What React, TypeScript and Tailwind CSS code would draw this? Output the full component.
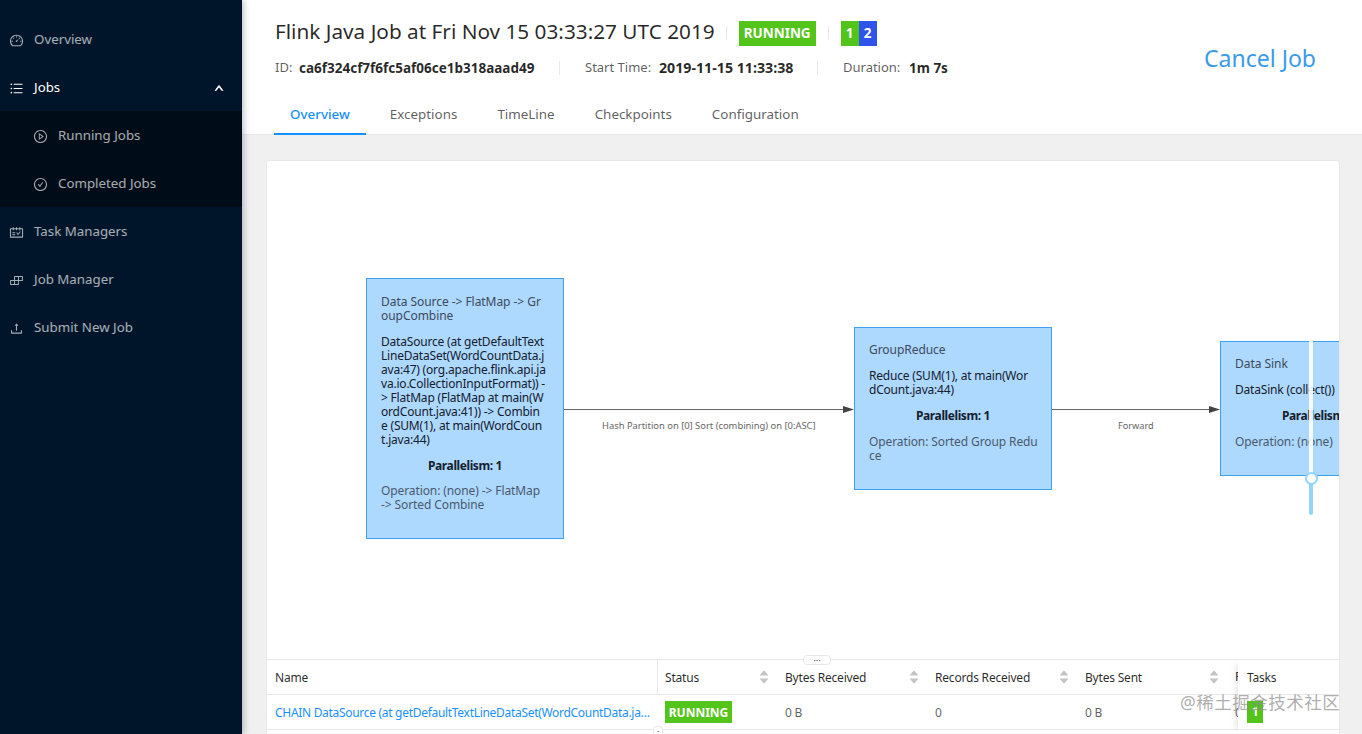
import type { ReactNode } from "react";
import {
  AiFillCaretDown,
  AiFillCaretUp,
  AiOutlineBuild,
  AiOutlineCheckCircle,
  AiOutlineDashboard,
  AiOutlinePlayCircle,
  AiOutlineSchedule,
  AiOutlineUnorderedList,
  AiOutlineUp,
  AiOutlineUpload,
} from "react-icons/ai";

const font = { fontFamily: '"Noto Sans", "Noto Sans CJK SC", sans-serif' };

function MenuItem({ icon, label, sub, active }: { icon: ReactNode; label: string; sub?: boolean; active?: boolean }) {
  return (
    <div
      className={`flex h-12 items-center gap-[10px] pt-[2px] text-[13.3px] ${sub ? "pl-[33px]" : "pl-[9px]"} ${active ? "text-white" : "text-white/65"}`}
    >
      <span className="text-[15px]">{icon}</span>
      <span>{label}</span>
      {active && <AiOutlineUp className="mr-[18px] ml-auto text-[10px]" strokeWidth={100} />}
    </div>
  );
}

function Sidebar() {
  return (
    <aside className="z-10 w-[242px] shrink-0 bg-[#001529] pt-[15px] shadow-[2px_0_6px_rgba(0,21,41,0.25)]">
      <MenuItem icon={<AiOutlineDashboard />} label="Overview" />
      <MenuItem icon={<AiOutlineUnorderedList />} label="Jobs" active />
      <div className="bg-[#000c17]">
        <MenuItem icon={<AiOutlinePlayCircle />} label="Running Jobs" sub />
        <MenuItem icon={<AiOutlineCheckCircle />} label="Completed Jobs" sub />
      </div>
      <MenuItem icon={<AiOutlineSchedule />} label="Task Managers" />
      <MenuItem icon={<AiOutlineBuild />} label="Job Manager" />
      <MenuItem icon={<AiOutlineUpload />} label="Submit New Job" />
    </aside>
  );
}

const Divider = () => <span className="block h-[14px] w-px bg-[#e8e8e8]" />;

function Header() {
  const tabs = ["Overview", "Exceptions", "TimeLine", "Checkpoints", "Configuration"];
  return (
    <header className="h-[135px] shrink-0 border-b border-[#e8e8e8] bg-white">
      <div className="flex items-start justify-between pt-5 pr-[46px] pl-[33px]">
        <div>
          <div className="flex h-[26px] items-center">
            <h1 className="mb-[3px] text-[20.75px] font-normal text-black/85">Flink Java Job at Fri Nov 15 03:33:27 UTC 2019</h1>
            <span className="mx-[11.5px]"><Divider /></span>
            <span className="flex h-[25px] w-[77px] items-center justify-center bg-[#52c41a] text-[13.5px] font-bold text-white">
              RUNNING
            </span>
            <span className="mx-3"><Divider /></span>
            <span className="flex h-[25px] text-[13.5px] font-bold text-white">
              <span className="flex w-[18px] items-center justify-center bg-[#52c41a]">1</span>
              <span className="flex w-[18px] items-center justify-center bg-[#2f54eb]">2</span>
            </span>
          </div>
          <div className="mt-[12px] flex h-[20px] items-center text-[13px] text-black/65">
            <span className="w-[24px]">ID:</span>
            <b className="w-[260px] text-[13.5px] font-bold text-black/85">ca6f324cf7f6fc5af06ce1b318aaad49</b>
            <Divider />
            <span className="ml-[25px] w-[74px]">Start Time:</span>
            <b className="w-[158px] text-[14.2px] font-bold text-black/85">2019-11-15 11:33:38</b>
            <Divider />
            <span className="ml-[25px] w-[66px]">Duration:</span>
            <b className="text-[13.5px] font-bold text-black/85">1m 7s</b>
          </div>
        </div>
        <span className="mt-[21px] text-[23px] text-[#3a9be8]">Cancel Job</span>
      </div>
      <nav className="mt-[18px] flex pl-8">
        {tabs.map((tab, i) => (
          <div
            key={tab}
            className={`mr-2 flex h-[39px] items-center border-b-2 px-4 text-[13.4px] ${
              i === 0 ? "border-[#1890ff] font-medium text-[#1890ff]" : "border-transparent text-black/65"
            }`}
          >
            {tab}
          </div>
        ))}
      </nav>
    </header>
  );
}

interface PlanNode {
  box: string;
  opGap: string;
  title: string;
  detail: string;
  operation: string;
}

const nodes: PlanNode[] = [
  {
    box: "left-[99px] top-[117px] h-[261px] pt-4",
    opGap: "mt-[11px]",
    title: "Data Source -> FlatMap -> Gr\noupCombine",
    detail:
      "DataSource (at getDefaultText\nLineDataSet(WordCountData.j\nava:47) (org.apache.flink.api.ja\nva.io.CollectionInputFormat)) -\n> FlatMap (FlatMap at main(W\nordCount.java:41)) -> Combin\ne (SUM(1), at main(WordCoun\nt.java:44)",
    operation: "Operation: (none) -> FlatMap\n-> Sorted Combine",
  },
  {
    box: "left-[587px] top-[166px] h-[163px] pt-[15px]",
    opGap: "mt-3",
    title: "GroupReduce",
    detail: "Reduce (SUM(1), at main(Wor\ndCount.java:44)",
    operation: "Operation: Sorted Group Redu\nce",
  },
  {
    box: "left-[953px] top-[180px] h-[135px] pt-[15px]",
    opGap: "mt-3",
    title: "Data Sink",
    detail: "DataSink (collect())",
    operation: "Operation: (none)",
  },
];

function NodeCard({ node }: { node: PlanNode }) {
  return (
    <div
      className={`absolute w-[198px] border border-[#3f9ff0] bg-[#add8ff] px-[14px] text-[12px] leading-[14px] whitespace-pre ${node.box}`}
    >
      <p className="tracking-[-0.05px] text-[#3c4a5c]">{node.title}</p>
      <p className="mt-3 tracking-[-0.2px] text-[#14202c]">{node.detail}</p>
      <p className="mt-3 text-center font-bold tracking-[-0.4px] text-[#14202c]">Parallelism: 1</p>
      <p className={`tracking-[-0.1px] text-[#4a5a6c] ${node.opGap}`}>{node.operation}</p>
    </div>
  );
}

function Graph() {
  return (
    <div className="relative flex-1 overflow-hidden">
      <svg className="absolute inset-0 h-full w-full">
        <path d="M297 248.5H579M785 248.5H945" stroke="#666" strokeWidth="1" fill="none" />
        <path d="M576 245L587 248.5L576 252Z M942 245L953 248.5L942 252Z" fill="#444" />
      </svg>
      {nodes.map((n) => (
        <NodeCard key={n.title} node={n} />
      ))}
      <span className="absolute top-[258px] left-[335px] text-[9.4px] text-[#666]">
        Hash Partition on [0] Sort (combining) on [0:ASC]
      </span>
      <span className="absolute top-[258px] left-[851px] text-[9.2px] text-[#666]">Forward</span>

      {/* zoom slider */}
      <div className="absolute top-[155px] left-[1042px] h-[199px] w-1 rounded-sm bg-white/90">
        <div className="absolute right-0 bottom-0 left-0 h-9 rounded-b-sm bg-[#91d5ff]" />
        <div className="absolute top-[156px] left-[-4.5px] h-[13px] w-[13px] rounded-full border-2 border-[#91d5ff] bg-white" />
      </div>
    </div>
  );
}

const Sorter = () => (
  <span className="flex flex-col text-[12px] leading-none text-[#c4c4c4]">
    <AiFillCaretUp className="-mb-[4px]" />
    <AiFillCaretDown />
  </span>
);

function HeadCell({ label, width }: { label: string; width: string }) {
  return (
    <div className={`flex shrink-0 items-center justify-between pr-[7px] pl-2 ${width}`}>
      <span className="pt-px">{label}</span>
      <Sorter />
    </div>
  );
}

function Table() {
  return (
    <div className="relative h-[75px] shrink-0 overflow-hidden border-t border-[#e8e8e8] text-[12px] tracking-[-0.2px] text-black/65">
      <div className="flex h-[35px] items-stretch border-b border-[#e8e8e8] text-black/85">
        <div className="flex w-[391px] shrink-0 items-center border-r border-[#e8e8e8] pt-px pl-2">Name</div>
        <HeadCell label="Status" width="w-[119px] !pl-[7px]" />
        <HeadCell label="Bytes Received" width="w-[150px]" />
        <HeadCell label="Records Received" width="w-[150px]" />
        <HeadCell label="Bytes Sent" width="w-[150px]" />
        <div className="flex items-center pl-2">R</div>
      </div>
      <div className="flex h-[35px] items-center border-b border-[#e8e8e8]">
        <div className="w-[390px] shrink-0 truncate pt-px pr-[2px] pl-2 tracking-[-0.3px] text-[#1890ff]">
          CHAIN DataSource (at getDefaultTextLineDataSet(WordCountData.java:47) (org.apache.flink)
        </div>
        <div className="w-[120px] shrink-0 pl-2">
          <span className="flex h-[22px] w-[67px] items-center justify-center bg-[#52c41a] pt-px font-bold tracking-normal text-white">RUNNING</span>
        </div>
        <div className="w-[150px] shrink-0 pt-px pl-2">0 B</div>
        <div className="w-[150px] shrink-0 pt-px pl-2">0</div>
        <div className="w-[150px] shrink-0 pt-px pl-2">0 B</div>
        <div className="pt-px pl-2">0</div>
      </div>

      {/* fixed Tasks column */}
      <div className="absolute top-0 right-0 h-full w-[101px] bg-white shadow-[-6px_0_6px_-4px_rgba(0,0,0,0.1)]">
        <div className="flex h-[35px] items-center border-b border-[#e8e8e8] pt-px pl-[9px] text-black/85">Tasks</div>
        <div className="flex h-[35px] items-center border-b border-[#e8e8e8] pl-[9px]">
          <span className="flex h-[22px] w-4 items-center justify-center bg-[#52c41a] font-bold text-white">1</span>
        </div>
      </div>
      <span className="absolute top-[66px] left-[386px] flex h-4 w-[10px] justify-center rounded-sm border border-[#e8e8e8] bg-white text-[9px] leading-[10px] text-[#555]">
        ·
      </span>
    </div>
  );
}

export default function App() {
  return (
    <div className="flex h-[734px] w-[1362px] overflow-hidden" style={font}>
      <Sidebar />
      <main className="flex min-w-0 flex-1 flex-col">
        <Header />
        <div className="flex min-h-0 flex-1 flex-col bg-[#f0f0f0] pt-[25px] pr-[22px] pl-6">
          <div className="relative flex min-h-0 flex-1 flex-col rounded-t-sm border-x border-t border-[#e8e8e8] bg-white">
            <Graph />
            <Table />
            <span className="absolute top-[494px] left-[536px] flex h-[10px] w-[28px] items-center justify-center rounded-sm border border-[#e8e8e8] bg-white text-[9px] leading-none text-[#555]">
              ···
            </span>
          </div>
        </div>
      </main>
      <span className="absolute top-[689px] left-[1180px] text-[17.5px] tracking-[0.5px] text-[#8c8c8c]/70">@稀土掘金技术社区</span>
    </div>
  );
}
